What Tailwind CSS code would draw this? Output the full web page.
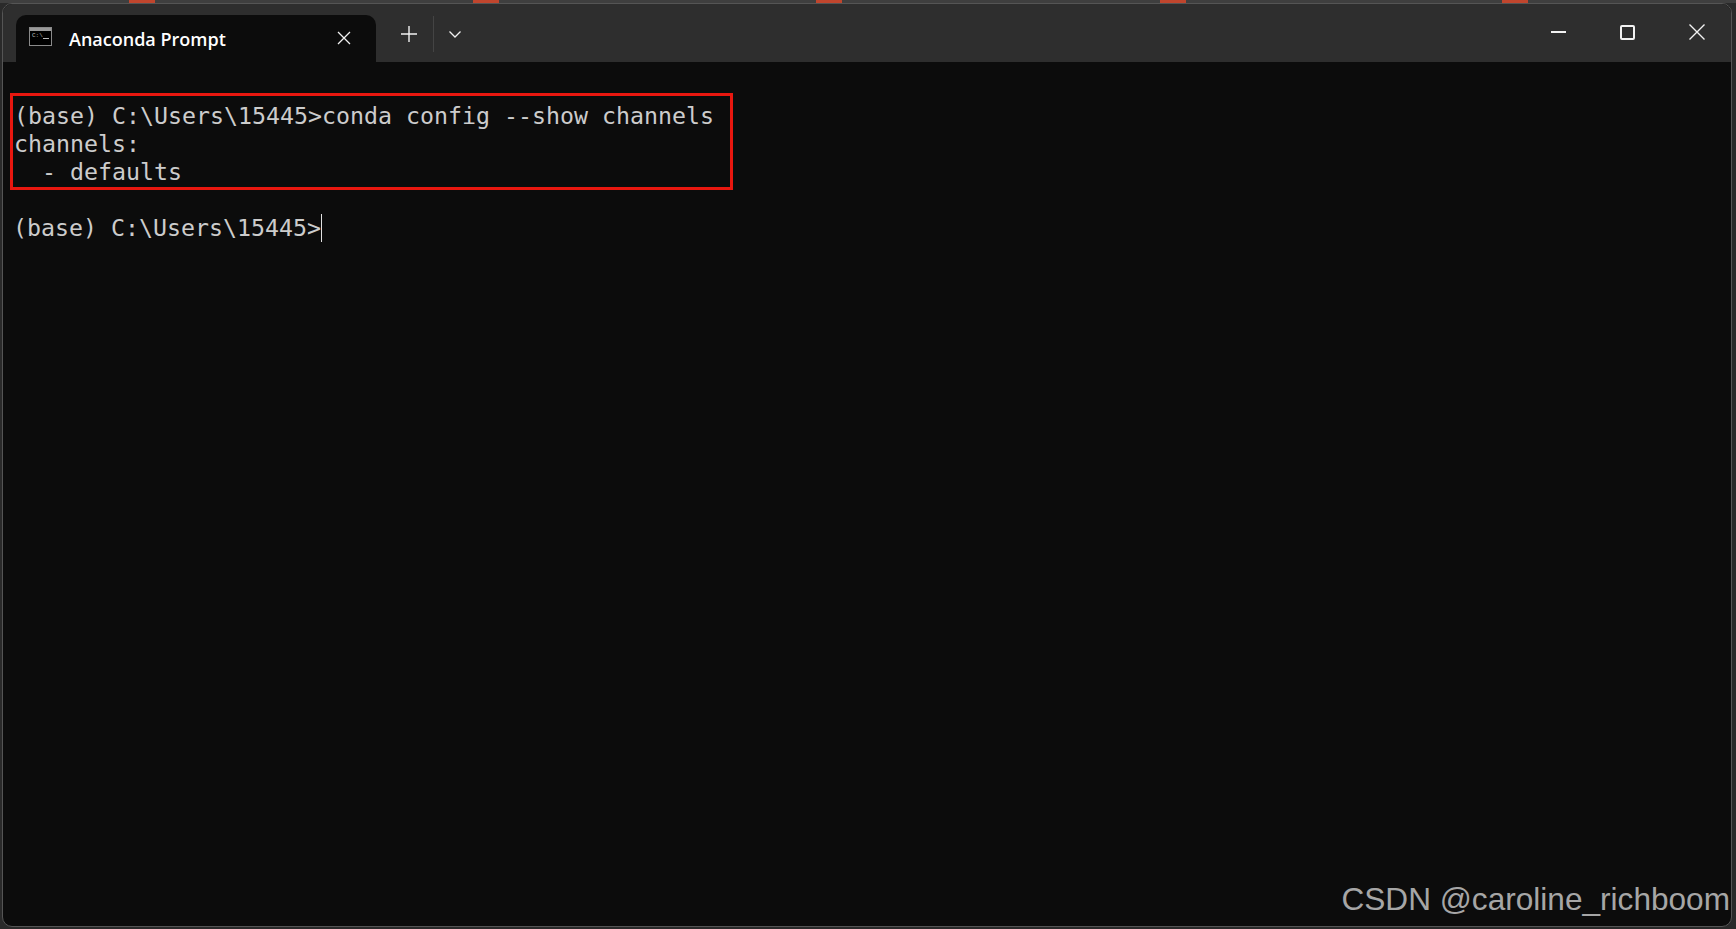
<!DOCTYPE html>
<html lang="en">

<head>
  <meta charset="UTF-8" />
  <title>Anaconda Prompt</title>
  <script src="https://cdn.jsdelivr.net/npm/@tailwindcss/browser@4"></script>
</head>

<body class="w-[1736px] h-[929px] overflow-hidden bg-[#2a2a2a] relative">

  <!-- strip of the desktop behind the window -->
  <div class="absolute top-0 left-0 right-0 h-[3px] flex bg-[#3f3f3f]">
    <div class="w-[129px]"></div>
    <div class="w-[26px] bg-[#c0452d]"></div>
    <div class="w-[318px]"></div>
    <div class="w-[26px] bg-[#c0452d]"></div>
    <div class="w-[317px]"></div>
    <div class="w-[26px] bg-[#c0452d]"></div>
    <div class="w-[318px]"></div>
    <div class="w-[26px] bg-[#c0452d]"></div>
    <div class="w-[316px]"></div>
    <div class="w-[26px] bg-[#c0452d]"></div>
  </div>

  <div class="absolute top-[3px] left-[2px] right-[4px] bottom-[2px] rounded-[10px] border border-[#555555] overflow-hidden flex flex-col bg-[#0c0c0c]">
    <!-- title bar -->
    <div class="h-[58px] shrink-0 bg-[#2e2e2e] flex items-end pl-[13px]">
      <div class="w-[360px] h-[47px] bg-[#0c0c0c] rounded-t-[10px] flex items-center pl-[13px] pr-[25px] pb-[1px]">
        <svg width="23" height="19" viewBox="0 0 23 19" class="shrink-0 mb-[3px]">
          <rect x="0.5" y="0.5" width="22" height="18" fill="#000" stroke="#8a8a8a" />
          <rect x="1" y="1" width="21" height="3" fill="#9a9a9a" />
          <text x="3" y="10" font-size="6" fill="#bbb" font-family="Liberation Mono">C:\</text>
          <rect x="14" y="11" width="6" height="1" fill="#bbb" />
        </svg>
        <span class="ml-[17px] pt-[2px] text-[18px] font-semibold text-white font-['Open_Sans',sans-serif]">Anaconda Prompt</span>
        <svg width="14" height="14" viewBox="0 0 14 14" class="ml-auto" fill="none" stroke="#f2f2f2" stroke-width="1.3">
          <path d="M1 1 13 13M13 1 1 13" />
        </svg>
      </div>
      <div class="flex items-center h-[47px] pb-[9px] pl-[25px]">
        <svg width="16" height="16" viewBox="0 0 16 16" fill="none" stroke="#f2f2f2" stroke-width="1.4">
          <path d="M8 0V16M0 8H16" />
        </svg>
        <div class="w-px h-[36px] bg-[#444444] ml-[16px]"></div>
        <svg width="12" height="7" viewBox="0 0 12 7" class="ml-[15px]" fill="none" stroke="#f2f2f2" stroke-width="1.3">
          <path d="M0.5 0.5 6 6 11.5 0.5" />
        </svg>
      </div>
      <div class="ml-auto h-full flex items-center gap-[54px] pr-[26px] pb-[2px]">
        <div class="w-[15px] h-[2px] bg-[#f2f2f2]"></div>
        <div class="w-[15px] h-[15px] border-2 border-[#f2f2f2] rounded-[2px]"></div>
        <svg width="16" height="16" viewBox="0 0 16 16" fill="none" stroke="#f2f2f2" stroke-width="1.4">
          <path d="M0.5 0.5 15.5 15.5M15.5 0.5 0.5 15.5" />
        </svg>
      </div>
    </div>

    <!-- terminal -->
    <div class="flex-1 pt-[31px] pl-[7px] font-['DejaVu_Sans_Mono',monospace] text-[23.25px] leading-[28px] text-[#cccccc] relative">
      <div class="w-[723px] h-[97px] border-[3px] border-[#e8170f] pl-[1px] pt-[6px]">
        <div class="whitespace-pre">(base) C:\Users\15445&gt;conda config --show channels</div>
        <div class="whitespace-pre">channels:</div>
        <div class="whitespace-pre">  - defaults</div>
      </div>
      <div class="pl-[3px] pt-[24px] flex items-center whitespace-pre">(base) C:\Users\15445&gt;<span class="w-px h-[28px] bg-[#e0e0e0]"></span></div>
      <div class="absolute right-[1px] bottom-[9px] font-['Liberation_Sans',sans-serif] text-[31.6px] leading-[36px] text-[#a6a6a6]">CSDN @caroline_richboom</div>
    </div>
  </div>

</body>

</html>
